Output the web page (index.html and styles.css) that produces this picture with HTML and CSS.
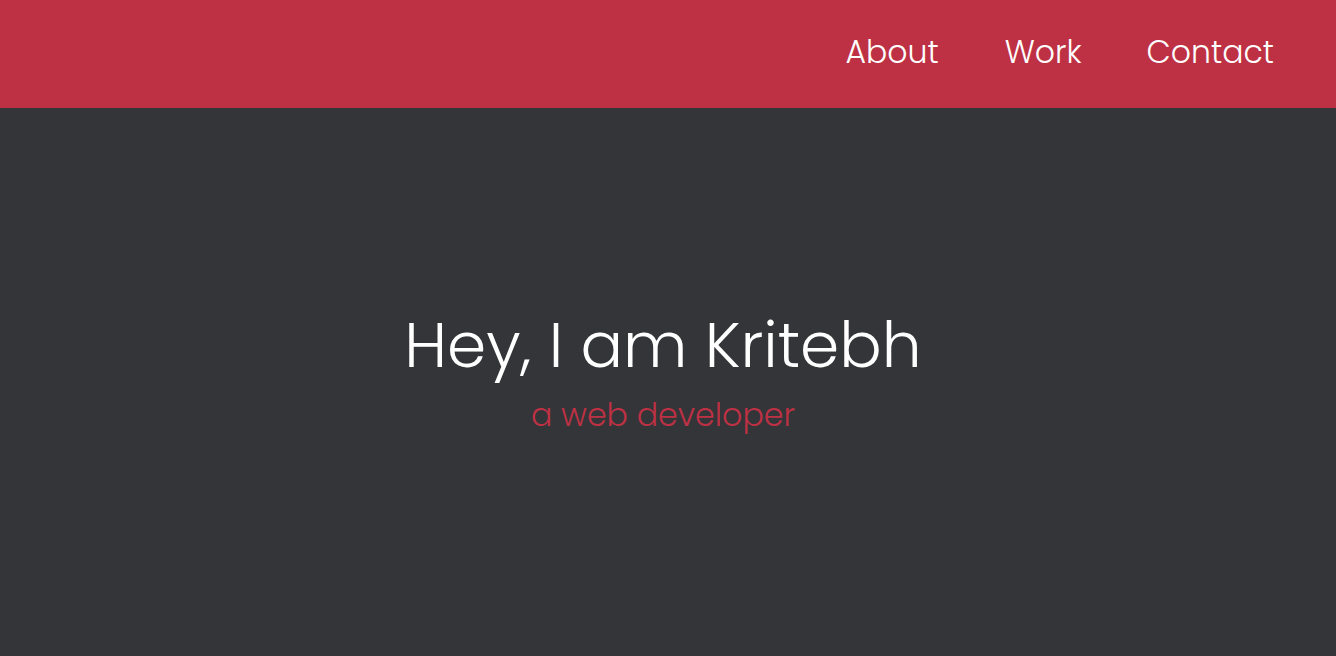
FILE: index.html
```html
<!DOCTYPE html>
<html lang="en">
<head>
<meta charset="utf-8">
<title>Kritebh</title>
<link rel="stylesheet" href="styles.css">
</head>
<body>
<header class="topbar">
  <nav class="nav">
    <a class="nav-link" href="#about">About</a>
    <a class="nav-link" href="#work">Work</a>
    <a class="nav-link" href="#contact">Contact</a>
  </nav>
</header>
<main class="hero">
  <h1 class="hero-title">Hey, I am Kritebh</h1>
  <p class="hero-sub">a web developer</p>
</main>
</body>
</html>
```
FILE: styles.css
```css
* { box-sizing: border-box; }
html, body { margin: 0; padding: 0; height: 100%; }
body {
  background: #333539;
  font-family: "Poppins", "Open Sans", "Noto Sans", sans-serif;
  font-weight: 300;
  color: #ffffff;
  display: flex;
  flex-direction: column;
}
.topbar {
  height: 108px;
  background: #be3144;
  display: flex;
  justify-content: flex-end;
  align-items: center;
  padding-right: 62px;
}
.nav {
  display: flex;
  gap: 65px;
  padding-bottom: 4px;
}
.nav-link {
  color: #ffffff;
  text-decoration: none;
  font-size: 31.5px;
  font-weight: 300;
}
.nav-link:first-child {
  margin-right: 1px;
}
.hero {
  flex: 1;
  display: flex;
  flex-direction: column;
  align-items: center;
  justify-content: center;
  padding-bottom: 26px;
  padding-right: 10px;
}
.hero-title {
  margin: 0;
  font-size: 63px;
  font-weight: 300;
  line-height: 1.5;
}
.hero-sub {
  margin: 0;
  font-size: 31.7px;
  font-weight: 300;
  color: #be3144;
  line-height: 1.5;
}
```
